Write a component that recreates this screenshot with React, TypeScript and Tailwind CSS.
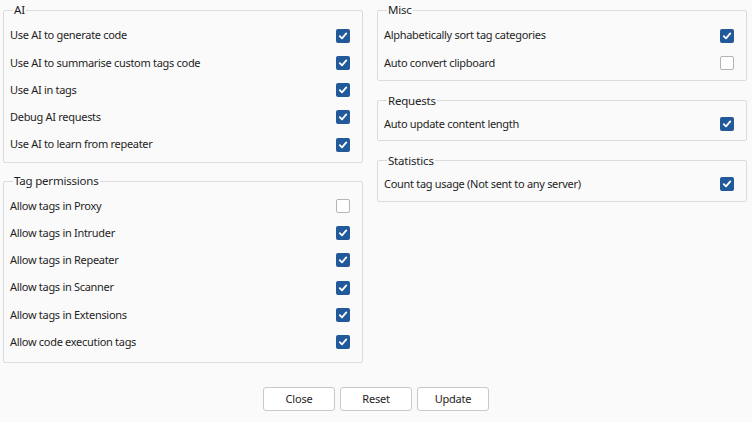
const ai = [
  { label: 'Use AI to generate code', on: true },
  { label: 'Use AI to summarise custom tags code', on: true },
  { label: 'Use AI in tags', on: true },
  { label: 'Debug AI requests', on: true },
  { label: 'Use AI to learn from repeater', on: true },
]

const perms = [
  { label: 'Allow tags in Proxy', on: false },
  { label: 'Allow tags in Intruder', on: true },
  { label: 'Allow tags in Repeater', on: true },
  { label: 'Allow tags in Scanner', on: true },
  { label: 'Allow tags in Extensions', on: true },
  { label: 'Allow code execution tags', on: true },
]

const misc = [
  { label: 'Alphabetically sort tag categories', on: true },
  { label: 'Auto convert clipboard', on: false },
]

function Box({ on }: { on: boolean }) {
  if (!on) {
    return <span className="block w-[14px] h-[14px] rounded-[2px] border border-[#b4b4b4] bg-white" />
  }
  return (
    <span className="flex w-[14px] h-[14px] items-center justify-center rounded-[2px] bg-[#22599a]">
      <svg width="10" height="10" viewBox="0 0 10 10">
        <path d="M1.8 5.2 L4 7.4 L8.3 2.4" fill="none" stroke="white" strokeWidth="1.8" strokeLinecap="round" strokeLinejoin="round" />
      </svg>
    </span>
  )
}

function Group({ title, items, className }: { title: string; items: { label: string; on: boolean }[]; className?: string }) {
  return (
    <fieldset className={`border border-[#dcdcdc] rounded-[2px] pl-[6px] pr-[12px] ${className ?? 'pt-[5px] pb-[4px]'}`}>
      <legend className="ml-[3px] px-[1px] text-[11.5px] leading-[14px] tracking-[-0.2px] text-[#1e1e1e]">{title}</legend>
      {items.map((it) => (
        <div key={it.label} className="flex h-[27.25px] items-center justify-between">
          <span className="text-[11px] tracking-[-0.3px] text-[#1e1e1e]">{it.label}</span>
          <Box on={it.on} />
        </div>
      ))}
    </fieldset>
  )
}

export default function App() {
  return (
    <div
      className="w-[752px] h-[422px] bg-[#fafafa] flex flex-col pt-[3px] pl-[3px] pr-[5px]"
      style={{ fontFamily: '"Noto Sans", "Open Sans", sans-serif' }}
    >
      <div className="flex gap-[14px]">
        <div className="w-[360px] flex flex-col gap-[11px]">
          <Group title="AI" items={ai} />
          <Group title="Tag permissions" items={perms} className="pt-[4px] pb-[6px]" />
        </div>
        <div className="w-[370px] flex flex-col gap-[13px]">
          <Group title="Misc" items={misc} className="pt-[5px] pb-[3px]" />
          <Group title="Requests" items={[{ label: 'Auto update content length', on: true }]} className="pt-[3px] pb-[2px]" />
          <Group title="Statistics" items={[{ label: 'Count tag usage (Not sent to any server)', on: true }]} className="pt-[3px] pb-[3px]" />
        </div>
      </div>
      <div className="flex justify-center gap-[5px] mt-[24px] pl-[2px]">
        {['Close', 'Reset', 'Update'].map((b) => (
          <button
            key={b}
            className="w-[72px] h-[24px] rounded-[3px] border border-[#c9c9c9] bg-white text-[11px] tracking-[-0.2px] text-[#1e1e1e]"
          >
            {b}
          </button>
        ))}
      </div>
    </div>
  )
}
